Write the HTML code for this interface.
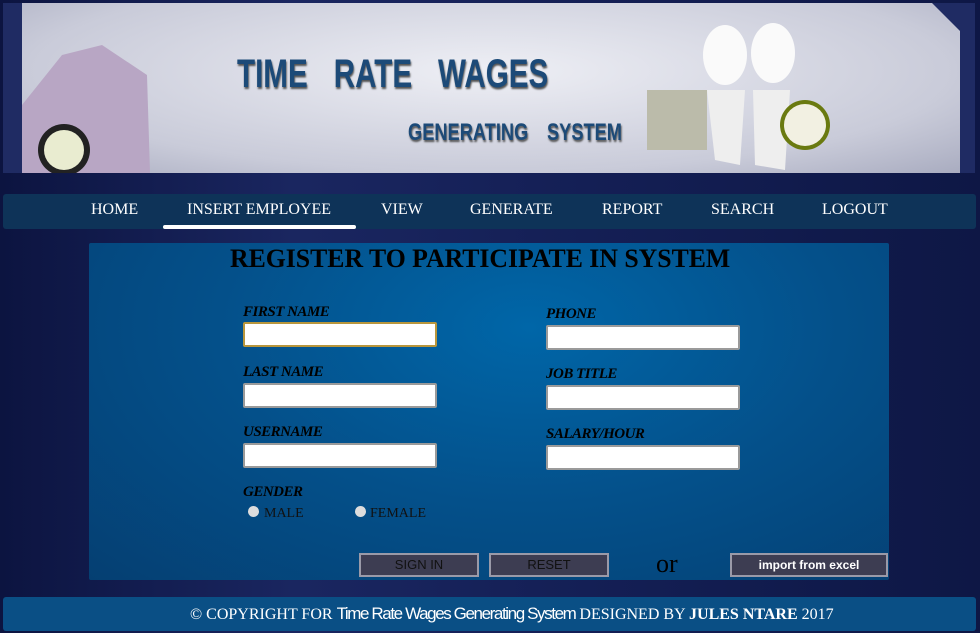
<!DOCTYPE html>
<html><head><meta charset="utf-8"><style>
*{margin:0;padding:0;box-sizing:border-box}
body{width:980px;height:633px;overflow:hidden;background:linear-gradient(90deg,#0c1440,#1a2660 30%,#141f55 60%,#0e1745);font-family:"Liberation Serif",serif;position:relative}
.frame{position:absolute;left:3px;top:3px;width:972px;height:170px;background:#1f2b63}
.banner{position:absolute;left:22px;top:3px;width:938px;height:170px;background:radial-gradient(ellipse at 50% 40%,#eeeff5,#c9cbd9 70%,#a9acc0);clip-path:polygon(0 0,910px 0,938px 28px,938px 170px,0 170px)}
.t1{position:absolute;left:237px;top:52px;font:bold 40px "Liberation Sans",sans-serif;color:#1c4a78;transform:scaleX(.74);transform-origin:left;word-spacing:24px;text-shadow:1px 2px 2px #555;white-space:nowrap}
.t2{position:absolute;left:408px;top:119px;font:bold 24px "Liberation Sans",sans-serif;color:#1c4a78;transform:scaleX(.76);transform-origin:left;word-spacing:18px;text-shadow:1px 2px 2px #555;white-space:nowrap}
.nav{position:absolute;left:3px;top:194px;width:973px;height:35px;background:#0e3358;border-radius:3px}
.nav a{position:absolute;top:7px;color:#fff;font-size:16px;text-decoration:none}
.ul{position:absolute;left:163px;top:225px;width:193px;height:4px;background:#fff;border-radius:2px}
.panel{position:absolute;left:89px;top:243px;width:800px;height:337px;background:radial-gradient(ellipse at 55% 25%,#0066a8,#04508a 50%,#053f72);border-radius:2px}
h1{position:absolute;left:230px;top:244px;font:bold 26px "Liberation Serif",serif;color:#000;white-space:nowrap;transform:scaleX(.99);transform-origin:left}
.lb{position:absolute;font:italic bold 15px "Liberation Serif",serif;color:#000;letter-spacing:-.5px}
.in{position:absolute;width:194px;height:25px;background:#fff;border:2px solid #9a9a9a;border-radius:2px}
.r{position:absolute;width:11px;height:11px;border-radius:50%;background:#ddd}
.rl{position:absolute;font-size:14px;color:#111}
.btn{position:absolute;top:553px;height:24px;background:#3d3d52;border:2px solid #9a9aa8;color:#111;font:13px "Liberation Sans",sans-serif;text-align:center;line-height:20px}
.foot{position:absolute;left:3px;top:597px;width:973px;height:34px;background:#0a4f85;border-radius:3px;color:#fff;font-size:16px;line-height:34px;white-space:nowrap}
.foot div{position:absolute;left:187px;top:0}
.nar{font-family:"Liberation Sans",sans-serif;font-size:17px;letter-spacing:-1.4px}
</style></head><body>
<div class="frame"></div>
<div class="banner"></div>
<svg style="position:absolute;left:22px;top:45px" width="130" height="128"><path d="M0 60 L40 10 L80 0 L125 30 L128 128 L0 128Z" fill="#b8a6c4"/><circle cx="42" cy="105" r="26" fill="#222"/><circle cx="42" cy="105" r="20" fill="#e9ecd0"/></svg>
<svg style="position:absolute;left:645px;top:15px" width="190" height="155"><rect x="2" y="75" width="60" height="60" fill="#bba" /><ellipse cx="80" cy="40" rx="22" ry="30" fill="#fafafa"/><ellipse cx="128" cy="38" rx="22" ry="30" fill="#fafafa"/><path d="M62 75 L100 75 L95 150 L70 145Z" fill="#eee"/><path d="M108 75 L145 75 L140 155 L110 150Z" fill="#eee"/><circle cx="160" cy="110" r="25" fill="#6a7a10"/><circle cx="160" cy="110" r="21" fill="#f2f0e2"/></svg>
<div class="t1">TIME RATE WAGES</div>
<div class="t2">GENERATING SYSTEM</div>
<div class="nav">
<a style="left:88px">HOME</a><a style="left:184px">INSERT EMPLOYEE</a><a style="left:378px">VIEW</a><a style="left:467px">GENERATE</a><a style="left:599px">REPORT</a><a style="left:708px">SEARCH</a><a style="left:819px">LOGOUT</a>
</div>
<div class="ul"></div>
<div class="panel"></div>
<h1>REGISTER TO PARTICIPATE IN SYSTEM</h1>
<div class="lb" style="left:243px;top:304px">FIRST NAME</div>
<div class="in" style="left:243px;top:322px;border-color:#b8963c"></div>
<div class="lb" style="left:243px;top:364px">LAST NAME</div>
<div class="in" style="left:243px;top:383px"></div>
<div class="lb" style="left:243px;top:424px">USERNAME</div>
<div class="in" style="left:243px;top:443px"></div>
<div class="lb" style="left:546px;top:306px">PHONE</div>
<div class="in" style="left:546px;top:325px"></div>
<div class="lb" style="left:546px;top:366px">JOB TITLE</div>
<div class="in" style="left:546px;top:385px"></div>
<div class="lb" style="left:546px;top:426px">SALARY/HOUR</div>
<div class="in" style="left:546px;top:445px"></div>
<div class="lb" style="left:243px;top:484px">GENDER</div>
<div class="r" style="left:248px;top:506px"></div><div class="rl" style="left:264px;top:506px">MALE</div>
<div class="r" style="left:355px;top:506px"></div><div class="rl" style="left:370px;top:506px">FEMALE</div>
<div class="btn" style="left:359px;width:120px">SIGN IN</div>
<div class="btn" style="left:489px;width:120px">RESET</div>
<div style="position:absolute;left:656px;top:549px;font-size:26px;color:#000">or</div>
<div class="btn" style="left:730px;width:158px;color:#fff;font-weight:bold;font-size:12px">import from excel</div>
<div class="foot"><div>© COPYRIGHT FOR <span class="nar">Time Rate Wages Generating System</span> DESIGNED BY <b>JULES NTARE</b> 2017</div></div>
</body></html>
